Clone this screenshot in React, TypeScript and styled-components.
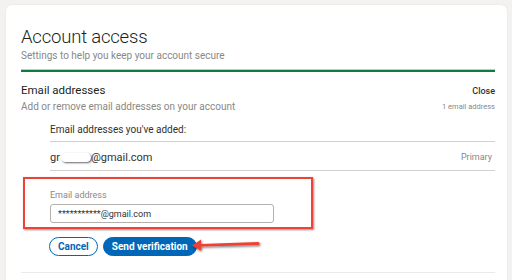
import React from 'react';
import styled, { createGlobalStyle } from 'styled-components';

const GlobalStyle = createGlobalStyle`
  html, body {
    margin: 0;
    padding: 0;
    width: 512px;
    height: 280px;
    overflow: hidden;
    background: #f3f2f1;
    font-family: Roboto, 'Noto Sans', sans-serif;
    color: #201f1e;
  }
`;

const App = () => {
  return (
    <St.Page>
      <GlobalStyle />
      <St.Card>
        <St.Title>Account access</St.Title>
        <St.Subtitle>Settings to help you keep your account secure</St.Subtitle>
        <St.GreenRule />

        <St.SectionHeader>
          <div>
            <St.SectionTitle>Email addresses</St.SectionTitle>
            <St.SectionDesc>Add or remove email addresses on your account</St.SectionDesc>
          </div>
          <St.SectionMeta>
            <St.CloseLink>Close</St.CloseLink>
            <St.Count>1 email address</St.Count>
          </St.SectionMeta>
        </St.SectionHeader>

        <St.List>
          <St.ListLabel>Email addresses you've added:</St.ListLabel>
          <St.EmailRow>
            <St.EmailText>
              gr
              <St.Redact />
              @gmail.com
            </St.EmailText>
            <St.Tag>Primary</St.Tag>
          </St.EmailRow>
        </St.List>

        <St.Highlight>
          <St.FieldLabel>Email address</St.FieldLabel>
          <St.Input readOnly value='***********@gmail.com' />
        </St.Highlight>

        <St.ButtonRow>
          <St.Button>Cancel</St.Button>
          <St.Button $primary>Send verification</St.Button>
          <St.Arrow width='72' height='16' viewBox='0 0 72 16'>
            <defs>
              <filter id='sh' x='-20%' y='-50%' width='140%' height='200%'>
                <feDropShadow dx='1' dy='1.2' stdDeviation='0.8' floodColor='#000' floodOpacity='0.55' />
              </filter>
            </defs>
            <g filter='url(#sh)'>
              <path d='M67 5 L10 7 L10 2.6 L1 8.4 L10 13.8 L10 9.6 L67 8 Z' fill='#ef4136' />
              <circle cx='67' cy='6.5' r='1.6' fill='#ef4136' />
            </g>
          </St.Arrow>
        </St.ButtonRow>

        <St.BottomRule />
      </St.Card>
    </St.Page>
  );
};

const St = {
  Page: styled.div`
    width: 512px;
    height: 280px;
    box-sizing: border-box;
    padding: 5px 5px 0 6px;
  `,

  Card: styled.div`
    height: 100%;
    box-sizing: border-box;
    background: #ffffff;
    border-radius: 6px 6px 0 0;
    box-shadow: 0 0 2px rgba(0, 0, 0, 0.08);
    padding: 19px 12px 0 15px;
  `,

  Title: styled.h1`
    margin: 0;
    font-size: 18.5px;
    font-weight: 300;
    letter-spacing: -0.2px;
    line-height: 26px;
    color: #201f1e;
  `,

  Subtitle: styled.div`
    margin-top: -1px;
    font-size: 10px;
    line-height: 13px;
    color: #8a8886;
  `,

  GreenRule: styled.div`
    margin-top: 7px;
    height: 2px;
    background: #107c41;
    border-top: 1px solid #c8c6c4;
  `,

  SectionHeader: styled.div`
    display: flex;
    justify-content: space-between;
    align-items: flex-start;
    margin-top: 9px;
  `,

  SectionTitle: styled.div`
    font-size: 11.5px;
    line-height: 18px;
    color: #201f1e;
  `,

  SectionDesc: styled.div`
    margin-top: 1px;
    font-size: 10px;
    line-height: 14px;
    color: #8a8886;
  `,

  SectionMeta: styled.div`
    display: flex;
    flex-direction: column;
    align-items: flex-end;
    padding-top: 3px;
  `,

  CloseLink: styled.div`
    font-size: 9px;
    font-weight: 500;
    line-height: 14px;
    color: #323130;
  `,

  Count: styled.div`
    margin-top: 3px;
    font-size: 7.5px;
    line-height: 12px;
    color: #8a8886;
  `,

  List: styled.div`
    margin-left: 29px;
    margin-top: 9px;
  `,

  ListLabel: styled.div`
    font-size: 10px;
    line-height: 14px;
    color: #323130;
    padding-bottom: 4px;
  `,

  EmailRow: styled.div`
    display: flex;
    justify-content: space-between;
    align-items: center;
    height: 30px;
    box-sizing: border-box;
    padding: 2px 3px 0 0;
    border-top: 1px solid #d2d0ce;
    border-bottom: 1px solid #d2d0ce;
  `,

  EmailText: styled.div`
    display: flex;
    align-items: center;
    font-size: 11px;
    color: #323130;
  `,

  Redact: styled.span`
    display: inline-block;
    width: 30px;
    height: 9px;
    margin-left: 1px;
    border-radius: 5px;
    background: #ffffff;
    box-shadow: 1px 1px 2px rgba(0, 0, 0, 0.6);
  `,

  Tag: styled.div`
    font-size: 9px;
    color: #8a8886;
  `,

  Highlight: styled.div`
    margin-top: 6px;
    margin-left: 2px;
    width: 290px;
    height: 52px;
    box-sizing: border-box;
    border: 2px solid #ef4136;
    box-shadow: 1px 1px 2px rgba(0, 0, 0, 0.45);
    padding: 10px 0 0 25px;
  `,

  FieldLabel: styled.div`
    font-size: 9px;
    line-height: 12px;
    color: #8a8886;
  `,

  Input: styled.input`
    display: block;
    margin-top: 3px;
    width: 224px;
    height: 19px;
    box-sizing: border-box;
    border: 1px solid #b3b0ad;
    border-radius: 3px;
    padding: 0 0 0 7px;
    font-family: inherit;
    font-size: 9px;
    color: #323130;
    outline: none;
  `,

  ButtonRow: styled.div`
    position: relative;
    display: flex;
    gap: 5px;
    margin-top: 8px;
    margin-left: 28px;
  `,

  Button: styled.button<{ $primary?: boolean }>`
    height: 19px;
    box-sizing: border-box;
    padding: 0 8px;
    border-radius: 10px;
    border: 1px solid #0067b8;
    background: ${(p) => (p.$primary ? '#0067b8' : '#ffffff')};
    color: ${(p) => (p.$primary ? '#ffffff' : '#0067b8')};
    font-family: inherit;
    font-size: 10px;
    font-weight: 700;
    cursor: pointer;
  `,

  Arrow: styled.svg`
    position: absolute;
    left: 142px;
    top: 0px;
  `,

  BottomRule: styled.div`
    margin-top: 16px;
    height: 1px;
    background: #edebe9;
  `,
};

export default App;
